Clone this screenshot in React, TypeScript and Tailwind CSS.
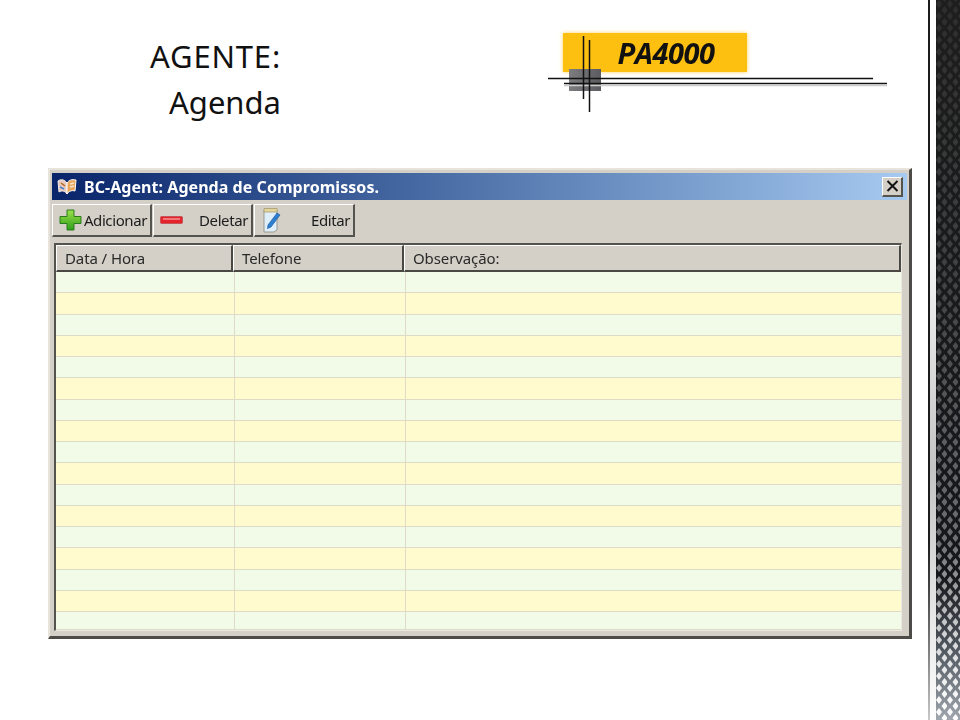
import React from "react";

const ROWS = Array.from({ length: 17 }, (_, i) => i);

// Small app icons from the window chrome
const BookIcon = () => (
  <svg width="22" height="20" viewBox="0 0 22 20">
    <path d="M11 6 C8 2 5 2 2 4 L3 15 C6 13 9 14 11 17 Z" fill="#e8c9c0" stroke="#f6ece4" strokeWidth="1" />
    <path d="M11 6 C13 3 16 2 20 3 L19 14 C16 13 13 14 11 17 Z" fill="#e9a55c" stroke="#fff" strokeWidth="1" />
    <path d="M5 6 L9 9" stroke="#b5651d" strokeWidth="1.5" />
    <path d="M4 10 L8 12" stroke="#4a80c8" strokeWidth="1.5" />
    <path d="M14 7 L18 6 M14 10 L18 9" stroke="#f7e4c8" strokeWidth="1.5" />
  </svg>
);

const PlusIcon = () => (
  <svg width="23" height="24" viewBox="0 0 23 24">
    <defs>
      <linearGradient id="plusFill" x1="0" y1="0" x2="0" y2="1">
        <stop offset="0" stopColor="#9be04a" />
        <stop offset="1" stopColor="#2f9e1a" />
      </linearGradient>
    </defs>
    <path d="M8 2 H15 V8.5 H22 V15.5 H15 V22 H8 V15.5 H1 V8.5 H8 Z" fill="url(#plusFill)" stroke="#2a7a1c" strokeWidth="1" />
  </svg>
);

const MinusIcon = () => (
  <svg width="23" height="10" viewBox="0 0 23 10">
    <rect x="0.5" y="1.5" width="22" height="7" rx="1" fill="#e5232b" stroke="#c4555a" />
    <rect x="3" y="3" width="17" height="2" fill="#f2767a" />
  </svg>
);

const NoteIcon = () => (
  <svg width="20" height="26" viewBox="0 0 20 26">
    <path d="M2 3 H15 V23 L12 25 H2 Z" fill="#dfeefb" stroke="#9a9a8c" />
    <path d="M2 1.5 H15 V5 H2 Z" fill="#e4d59a" stroke="#a89c6e" strokeWidth="0.8" />
    <path d="M6 18 L15 6 L18 8 L9 20 L5.5 21.5 Z" fill="#2f7fd0" stroke="#1c5ea8" strokeWidth="0.7" />
  </svg>
);

const ToolButton = ({ icon, label, width }: { icon: React.ReactNode; label: string; width: string }) => (
  <button
    className={`${width} h-[33px] flex items-center justify-between pl-[5px] pr-[3px] pt-[1px] bg-[#d4d0c8] border-t border-l border-t-white border-l-white border-r-2 border-b-2 border-r-[#55534e] border-b-[#55534e] text-[15px] text-[#1c1c1c] tracking-[-0.4px]`}
  >
    <span className="flex items-center justify-center w-[24px]">{icon}</span>
    <span>{label}</span>
  </button>
);

const HeaderCell = ({ label, width }: { label: string; width: string }) => (
  <div className={`${width} h-[27px] flex items-center pl-[8px] bg-[#d4d0c8] border-t border-l border-t-white border-l-white border-r-2 border-b-2 border-r-[#4a4843] border-b-[#4a4843] text-[15px] text-[#2a2a2a] tracking-[-0.1px]`}>
    {label}
  </div>
);

const Logo = () => (
  <div className="relative w-[340px] h-[95px] pt-[13px] pl-[15px] blur-[0.4px]">
    <div className="w-[184px] h-[39px] bg-[#fdbf10] shadow-[0_0_4px_#fdd266] flex items-center justify-center pl-[22px] font-['Open_Sans',sans-serif] font-bold italic text-[29px] tracking-[-0.5px] text-[#111111]">
      PA4000
    </div>
    <svg className="absolute left-0 top-0" width="340" height="95" viewBox="0 0 340 95">
      <defs>
        <linearGradient id="logoGrey" x1="0" y1="0" x2="1" y2="0">
          <stop offset="0" stopColor="#7d7d80" />
          <stop offset="1" stopColor="#5c5c60" />
        </linearGradient>
      </defs>
      <rect x="21" y="49" width="32" height="22" fill="url(#logoGrey)" />
      <path d="M0 58.5 H325" stroke="#111" strokeWidth="1.5" />
      <path d="M16 63.5 H339" stroke="#111" strokeWidth="1.5" />
      <path d="M16 65.5 H339" stroke="#ccc" strokeWidth="1.5" />
      <path d="M35.5 16 V79" stroke="#111" strokeWidth="1.5" />
      <path d="M41.5 20 V92" stroke="#111" strokeWidth="1.5" />
    </svg>
  </div>
);

// Diamond texture on the right edge of the slide
const CarbonStrip = () => (
  <svg className="block blur-[0.5px]" width="24" height="720" viewBox="0 0 24 720">
    <defs>
      <linearGradient id="stripBase" x1="0" y1="0" x2="0" y2="1">
        <stop offset="0" stopColor="#1e1e1e" />
        <stop offset="0.8" stopColor="#15171a" />
        <stop offset="0.9" stopColor="#50565e" />
        <stop offset="1" stopColor="#a0a6ae" />
      </linearGradient>
      <linearGradient id="stripFade" x1="0" y1="0" x2="0" y2="1">
        <stop offset="0" stopColor="#fff" stopOpacity="0.07" />
        <stop offset="0.4" stopColor="#fff" stopOpacity="0.18" />
        <stop offset="0.75" stopColor="#fff" stopOpacity="0.38" />
        <stop offset="0.88" stopColor="#fff" stopOpacity="0.75" />
        <stop offset="1" stopColor="#fff" stopOpacity="1" />
      </linearGradient>
      <mask id="stripMask">
        <rect width="24" height="720" fill="url(#stripFade)" />
      </mask>
      <pattern id="diamonds" width="11" height="12" patternUnits="userSpaceOnUse">
        <path d="M3 0 L6 4 L3 8 L0 4 Z M8.5 6 L11.5 10 L8.5 14 L5.5 10 Z M8.5 -6 L11.5 -2 L8.5 2 L5.5 -2 Z" fill="#fff" />
      </pattern>
    </defs>
    <rect width="24" height="720" fill="url(#stripBase)" />
    <rect width="24" height="720" fill="url(#diamonds)" mask="url(#stripMask)" />
  </svg>
);

export default function App() {
  return (
    <div className="w-[960px] h-[720px] flex bg-white overflow-hidden font-['Noto_Sans',sans-serif]">
      <main className="w-[928px] h-full flex flex-col">
        {/* Slide header */}
        <header className="h-[168px] flex items-start">
          <div className="w-[281px] pt-[33px] text-right text-[31px] leading-[46px] text-[#111111]">
            <div className="tracking-[0.8px]">AGENTE:</div>
            <div>Agenda</div>
          </div>
          <div className="ml-[267px] pt-[20px]">
            <Logo />
          </div>
        </header>

        {/* Dialog window */}
        <div className="ml-[48px] w-[864px] h-[471px] flex flex-col bg-[#d4d0c8] border-t-2 border-l-2 border-t-[#e8e4dc] border-l-[#e8e4dc] border-r-[3px] border-b-[3px] border-r-[#4d4b47] border-b-[#4d4b47] pt-[3px] px-[2px] blur-[0.3px]">
          <div className="h-[27px] shrink-0 flex items-center justify-between pl-[4px] pr-[4px] bg-gradient-to-r from-[#0a246a] to-[#a6caf0]">
            <div className="flex items-center gap-[6px] text-white font-bold text-[16px] tracking-[0.05px]">
              <BookIcon />
              <span>BC-Agent: Agenda de Compromissos.</span>
            </div>
            <div className="w-[21px] h-[20px] flex items-center justify-center bg-[#d4d0c8] border-t border-l border-t-white border-l-white border-r-2 border-b-2 border-r-[#55534e] border-b-[#55534e]">
              <svg width="13" height="12" viewBox="0 0 13 12">
                <path d="M1.5 1 L11.5 11 M11.5 1 L1.5 11" stroke="#111" strokeWidth="2" />
              </svg>
            </div>
          </div>

          <div className="h-[38px] shrink-0 flex items-center gap-[1px] pt-[2px]">
            <ToolButton icon={<PlusIcon />} label="Adicionar" width="w-[100px]" />
            <ToolButton icon={<MinusIcon />} label="Deletar" width="w-[100px]" />
            <ToolButton icon={<NoteIcon />} label="Editar" width="w-[101px]" />
          </div>

          {/* Grid */}
          <div className="ml-[2px] mr-[5px] mt-[5px] h-[388px] flex flex-col border-t-2 border-l-2 border-t-[#55534e] border-l-[#55534e] border-r border-b border-r-[#ece9e2] border-b-[#ece9e2]">
            <div className="flex shrink-0">
              <HeaderCell label="Data / Hora" width="w-[177px]" />
              <HeaderCell label="Telefone" width="w-[171px]" />
              <HeaderCell label="Observação:" width="flex-1" />
            </div>
            <div className="flex-1 flex flex-col">
              {ROWS.map((row) => (
                <div
                  key={row}
                  className={`${row === 16 ? "flex-1" : "h-[21.25px]"} flex border-b border-b-[#dedcc6] ${row % 2 === 0 ? "bg-[#f2fbe8]" : "bg-[#fffbcf]"}`}
                >
                  <div className="w-[179px] border-r border-r-[#dedcc6]" />
                  <div className="w-[171px] border-r border-r-[#dedcc6]" />
                  <div className="flex-1" />
                </div>
              ))}
            </div>
          </div>
        </div>
      </main>

      {/* Decorative carbon strip */}
      <aside className="w-[32px] h-full flex">
        <div className="w-[2px] h-full bg-gradient-to-b from-[#1c1c1c] from-75% to-[#c8c8c8]" />
        <div className="w-[6px] h-full bg-gradient-to-b from-white from-30% via-[#c4c4c4] via-65% to-white" />
        <CarbonStrip />
      </aside>
    </div>
  );
}
